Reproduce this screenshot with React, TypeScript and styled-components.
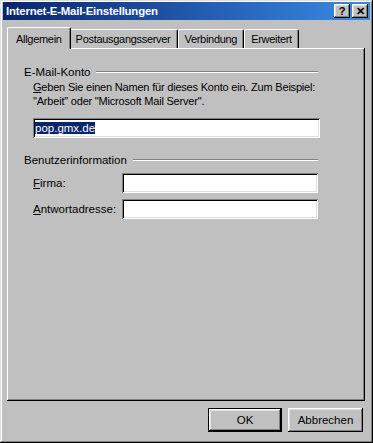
import React from 'react';
import styled, { createGlobalStyle } from 'styled-components';

const GlobalStyle = createGlobalStyle`
  html, body {
    margin: 0;
    padding: 0;
    background: #c0c0c0;
  }
  body {
    font-family: 'Liberation Sans', Arial, sans-serif;
    font-size: 11px;
    color: #000;
  }
`;

const Window = styled.div`
  width: 373px;
  height: 443px;
  box-sizing: border-box;
  background: #c0c0c0;
  padding: 2px 3px 3px 3px;
  display: flex;
  flex-direction: column;
  box-shadow: inset -1px -1px #000, inset 1px 1px #dfdfdf, inset -2px -2px #808080, inset 2px 2px #fff;
`;

const TitleBar = styled.div`
  height: 18px;
  display: flex;
  align-items: center;
  justify-content: space-between;
  padding: 0 2px 0 3px;
  background: linear-gradient(90deg, #0a246a 0%, #2a6cc4 70%, #3b8ce0 100%);
`;

const Title = styled.span`
  color: #fff;
  font-weight: bold;
  font-size: 11.4px;
  letter-spacing: -0.2px;
`;

const TitleButtons = styled.div`
  display: flex;
  gap: 2px;
`;

const CaptionButton = styled.button`
  width: 16px;
  height: 14px;
  padding: 0;
  border: none;
  background: #c0c0c0;
  font-family: 'Liberation Sans', Arial, sans-serif;
  font-weight: bold;
  font-size: 11px;
  line-height: 14px;
  color: #000;
  box-shadow: inset -1px -1px #000, inset 1px 1px #fff, inset -2px -2px #808080, inset 2px 2px #dfdfdf;
  display: flex;
  align-items: center;
  justify-content: center;
`;

const Body = styled.div`
  flex: 1;
  display: flex;
  flex-direction: column;
  padding: 5px 4px 0 4px;
`;

const TabStrip = styled.div`
  display: flex;
  align-items: flex-end;
  height: 23px;
  padding-left: 2px;
  position: relative;
  z-index: 1;
`;

const Tab = styled.div<{ $active?: boolean }>`
  height: ${(p) => (p.$active ? '22px' : '19px')};
  box-sizing: border-box;
  padding: 0 ${(p) => (p.$active ? '8px' : '6px')};
  margin: ${(p) => (p.$active ? '0 -2px -1px -2px' : '0')};
  display: flex;
  align-items: center;
  justify-content: center;
  background: #c0c0c0;
  border-top: 1px solid #fff;
  border-left: 1px solid #fff;
  border-right: 1px solid #000;
  border-top-left-radius: 2px;
  border-top-right-radius: 2px;
  box-shadow: inset -1px 0 #808080;
  font-size: 11px;
  letter-spacing: -0.3px;
  white-space: nowrap;
  position: relative;
  z-index: ${(p) => (p.$active ? 2 : 1)};
`;

const Panel = styled.div`
  height: 353px;
  box-sizing: border-box;
  margin-right: 1px;
  padding: 17px 47px 0 17px;
  box-shadow: inset -1px -1px #000, inset 1px 1px #fff, inset -2px -2px #808080;
`;

const GroupHead = styled.div`
  display: flex;
  align-items: center;
  gap: 6px;
  height: 14px;
`;

const GroupLine = styled.div`
  flex: 1;
  height: 0;
  border-top: 1px solid #808080;
  border-bottom: 1px solid #fff;
`;

const GroupBody = styled.div`
  padding-left: 9px;
`;

const Description = styled.p`
  margin: 1px 0 0 0;
  line-height: 14px;
  font-size: 11px;
  white-space: nowrap;
  letter-spacing: -0.2px;
`;

const TextBox = styled.div<{ $width?: number }>`
  height: 20px;
  box-sizing: border-box;
  width: ${(p) => (p.$width ? `${p.$width}px` : 'auto')};
  background: #fff;
  padding: 3px 2px 0 2px;
  box-shadow: inset 1px 1px #808080, inset -1px -1px #fff, inset 2px 2px #000, inset -2px -2px #dfdfdf;
  font-size: 11.5px;
  line-height: 14px;
`;

const AccountBox = styled.div`
  margin: 10px -2px 0 0;
`;

const Selected = styled.span`
  background: #0a246a;
  color: #fff;
`;

const Spacer = styled.div`
  height: 15px;
`;

const FieldRow = styled.div`
  display: flex;
  align-items: center;
  justify-content: space-between;
  margin-top: 6px;
`;

const Label = styled.span`
  font-size: 11.5px;
`;

const Footer = styled.div`
  display: flex;
  justify-content: flex-end;
  gap: 6px;
  padding: 7px 3px 0 0;
`;

const DialogButton = styled.button<{ $default?: boolean }>`
  width: ${(p) => (p.$default ? '74px' : '75px')};
  height: 24px;
  border: ${(p) => (p.$default ? '1px solid #000' : 'none')};
  background: #c0c0c0;
  font-family: 'Liberation Sans', Arial, sans-serif;
  font-size: 11.5px;
  color: #000;
  padding: 0;
  box-shadow: inset -1px -1px #000, inset 1px 1px #fff, inset -2px -2px #808080, inset 2px 2px #dfdfdf;
`;

const App = () => {
  return (
    <>
      <GlobalStyle />
      <Window>
        <TitleBar>
          <Title>Internet-E-Mail-Einstellungen</Title>
          <TitleButtons>
            <CaptionButton>?</CaptionButton>
            <CaptionButton>✕</CaptionButton>
          </TitleButtons>
        </TitleBar>
        <Body>
          <TabStrip>
            <Tab $active>Allgemein</Tab>
            <Tab>Postausgangsserver</Tab>
            <Tab>Verbindung</Tab>
            <Tab>Erweitert</Tab>
          </TabStrip>
          <Panel>
            <GroupHead>
              <Label>E-Mail-Konto</Label>
              <GroupLine />
            </GroupHead>
            <GroupBody>
              <Description>
                <u>G</u>eben Sie einen Namen für dieses Konto ein. Zum Beispiel:
                <br />
                "Arbeit" oder "Microsoft Mail Server".
              </Description>
              <AccountBox>
                <TextBox>
                  <Selected>pop.gmx.de</Selected>
                </TextBox>
              </AccountBox>
            </GroupBody>
            <Spacer />
            <GroupHead>
              <Label>Benutzerinformation</Label>
              <GroupLine />
            </GroupHead>
            <GroupBody>
              <FieldRow>
                <Label>
                  <u>F</u>irma:
                </Label>
                <TextBox $width={196} />
              </FieldRow>
              <FieldRow>
                <Label>
                  <u>A</u>ntwortadresse:
                </Label>
                <TextBox $width={196} />
              </FieldRow>
            </GroupBody>
          </Panel>
          <Footer>
            <DialogButton $default>OK</DialogButton>
            <DialogButton>Abbrechen</DialogButton>
          </Footer>
        </Body>
      </Window>
    </>
  );
};

export default App;
